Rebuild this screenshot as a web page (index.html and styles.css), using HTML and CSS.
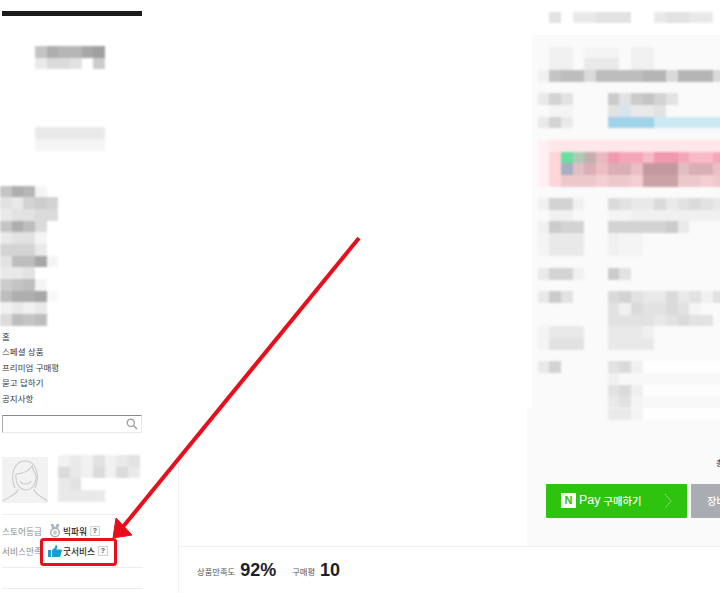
FILE: index.html
```html
<!DOCTYPE html>
<html lang="ko">
<head>
<meta charset="utf-8">
<title>스토어 상품</title>
<link rel="stylesheet" href="styles.css">
</head>
<body>
<div class="page">
  <aside class="sidebar">
    <div class="top-bar"></div>
    <div class="mosaic logo" data-rows="41220e|9778d5"></div>
    <div class="mosaic tagline" data-rows="999999|bbbbbb"></div>
    <div class="mosaic categories" data-rows="412b.|89656|98877|4137.|988b.|6669.|8330b|998..|543b.|3110c|a9a9.|7343."></div>
    <ul class="nav">
      <li>홈</li>
      <li>스페셜 상품</li>
      <li>프리미엄 구매평</li>
      <li>묻고 답하기</li>
      <li>공지사항</li>
    </ul>
    <div class="search">
      <svg class="search-icon" viewBox="0 0 12 12" width="12" height="12"><circle cx="4.8" cy="4.8" r="3.6"/><path d="M7.5 7.5 11 11"/></svg>
    </div>
    <div class="profile">
      <svg class="avatar" viewBox="0 0 46 46" width="46" height="46">
        <path d="M13 31C8 20 11 4 23 4s15 16 10 27"/>
        <path d="M14 17c6 0 13-3 16-8 1 4 2 6 4 9"/>
        <path d="M14 17c-1 9 4 16 10 16s11-7 10-15"/>
        <path d="M18 24c2 4 9 4 11 0"/>
        <path d="M16 32c0 5-8 7-15 12M32 32c0 5 7 7 13 12"/>
      </svg>
      <div class="mosaic seller" data-rows="a9a8a98|79a7a79|98.....|9999..."></div>
    </div>
    <div class="grade-list">
      <div class="grade-row">
        <span class="grade-label">스토어등급</span>
        <svg class="grade-icon" viewBox="0 0 13 14" width="13" height="14"><path class="medal-ribbon" d="M2 0h3l1.500 4L8 0h3L9 6H4z"/><circle class="medal-ring" cx="6.500" cy="8.500" r="4.300"/><circle class="medal-core" cx="6.500" cy="8.500" r="2.200"/></svg>
        <span class="grade-value">빅파워</span>
        <span class="help">?</span>
      </div>
      <div class="grade-row">
        <span class="grade-label">서비스만족</span>
        <svg class="grade-icon" viewBox="0 0 14 12" width="14" height="12"><path class="thumb" d="M0 5h3v7H0zM4 5l3-2.500L7.500 0c1.500 0 2 1.200 1.500 2.500L8.500 4.500H13c1 0 1 1 .8 1.500L12.500 11c-.2.700-.6 1-1.300 1H4z"/></svg>
        <span class="grade-value">굿서비스</span>
        <span class="help">?</span>
      </div>
    </div>
    <div class="side-rule"></div>
  </aside>

  <main class="main">
    <section class="content">
      <div class="detail">
        <div class="mosaic detail-head" data-rows=".8.99888..98899."></div>
        <div class="panel-top">
          <div class="mosaic" data-rows=".aa.bbb.aa......|.aa.999.aa......|a433733332272227|................|968...585468....|.bb...8y998.....|969...wwwwxxxxxx|................|fnnnnnnnnnnnnnnn|foghijkllmkklmml|fopqrzrrzsssqrrz|fotttuttuvvvttut|................|a66a..7899798789|.aac..bbaaaaaaaa|a566..6666659...|b999..abb.......|b999..abb.......|................|966a..58........|................|958...76899798a8|......8a78878b..|......888898788.|b999..999a......|b888..9999......|................|96....87addddddd|......accccccccc|......87addddddd|......98bccccccc"></div>
        </div>
        <div class="panel-bottom">
          <div class="mosaic last-row" data-rows="......99bddddddd"></div>
          <p class="total">총 상품 금액</p>
          <div class="actions">
            <button class="btn-pay" type="button">
              <span class="n-logo">N</span>
              <span class="pay-word">Pay</span>
              <span class="pay-label">구매하기</span>
              <svg class="pay-arrow" viewBox="0 0 8 16" width="8" height="16"><path d="M1 1l6 7-6 7"/></svg>
            </button>
            <button class="btn-cart" type="button">장바구니</button>
          </div>
        </div>
      </div>
    </section>
    <section class="stats">
      <span class="stat-label">상품만족도</span>
      <strong class="stat-value">92%</strong>
      <span class="stat-label stat-second">구매평</span>
      <strong class="stat-value">10</strong>
    </section>
  </main>

  <svg class="annotation" viewBox="0 0 720 593" width="720" height="593">
    <rect class="mark-box" x="41.500" y="539.500" width="74" height="25" rx="2"/>
    <path class="mark-line" d="M359 238 122 528"/>
    <path class="mark-head" d="M113 538 132 535 116 518z"/>
  </svg>
</div>
<script src="mosaic.js"></script>
</body>
</html>
```

FILE: styles.css
```css
* { box-sizing: border-box; }
html, body { margin: 0; padding: 0; background: #fff; }
body { font-family: "Noto Sans CJK KR", "Noto Sans", sans-serif; }

.page {
  position: relative;
  display: flex;
  width: 720px;
  height: 593px;
  overflow: hidden;
}

/* Pixelated regions */
.mosaic { display: grid; grid-auto-rows: 11.667px; filter: blur(0.9px); opacity: 0.92; }
.mosaic i { display: block; }

/* Sidebar */
.sidebar { flex: none; width: 178px; padding-left: 2px; display: flex; flex-direction: column; align-items: flex-start; }
.top-bar { width: 140px; height: 5px; margin-top: 11px; background: #1c1c1c; }
.logo { margin: 30px 0 0 33px; }
.tagline { margin: 58px 0 0 33px; }
.categories { margin: 35px 0 0 -2px; }

.nav { list-style: none; margin: 3px 0 0; padding: 0; font-size: 8.500px; line-height: 15.500px; color: #3a3a3a; white-space: nowrap; }

.search { position: relative; width: 140px; height: 18px; margin-top: 9px; border: 1px solid #e8e8e8; border-top-color: #8a8a8a; border-left-color: #adadad; display: flex; align-items: center; justify-content: flex-end; padding-right: 3px; }
.search-icon { fill: none; stroke: #9a9a9a; stroke-width: 1.200; }

.profile { display: flex; gap: 10px; margin-top: 22px; width: 140px; padding-bottom: 11px; border-bottom: 1px solid #f0f0f0; align-items: flex-start; }
.avatar { flex: none; margin-top: 2px; background: #f2f2f2; fill: none; stroke: #cbcbcb; stroke-width: 1.100; }

.grade-list { display: flex; flex-direction: column; gap: 6px; margin-top: 9px; width: 141px; padding-bottom: 9px; border-bottom: 1px solid #ececec; }
.grade-row { display: flex; align-items: center; height: 14px; font-size: 8.700px; }
.grade-label { width: 46px; flex: none; color: #8a8a8a; white-space: nowrap; }
.grade-icon { flex: none; width: 14px; margin-right: 1px; }
.grade-value { color: #2a2a2a; font-weight: 500; white-space: nowrap; }
.help { flex: none; width: 10px; height: 10px; margin-left: 3px; border: 1px solid #d2d2d2; background: #fafafa; color: #555; font: 700 7px/8px "Liberation Sans", sans-serif; text-align: center; }
.medal-ribbon { fill: #a9b8c2; }
.medal-ring { fill: #fff; stroke: #a8b0b4; stroke-width: 1.400; }
.medal-core { fill: #c6ccd0; }
.thumb { fill: #1b9fd2; }
.side-rule { width: 141px; height: 0; margin-top: 20px; border-top: 1px solid #ececec; }

/* Main column */
.main { flex: 1; min-width: 0; display: flex; flex-direction: column; border-left: 1px solid #f2f2f2; border-image: linear-gradient(transparent 75%, #f2f2f2 75%) 1; }
.content { flex: none; height: 547px; display: flex; justify-content: flex-end; border-bottom: 1px solid #f0f0f0; }
.detail { flex: none; width: 193px; overflow: hidden; display: flex; flex-direction: column; }
.detail-head { margin: 11.667px 0 0 10.667px; }
.panel-top { margin: 11.667px 0 0 5px; padding: 11.667px 0 0 5.667px; background: #fafafa; }
.panel-bottom { flex: 1; background: #fafafa; overflow: hidden; }
.last-row { margin-left: 10.667px; }
.total { margin: 38px 0 0 189px; width: 60px; font-size: 8px; line-height: 10px; color: #333; white-space: nowrap; }
.actions { display: flex; gap: 4px; margin: 16px 0 0 19px; width: 220px; }

.btn-pay { flex: none; width: 141px; height: 34px; border: 0; border-radius: 1px; padding: 0 15px; background: #2dc30f; color: #fff; display: flex; align-items: center; font-family: inherit; }
.n-logo { flex: none; width: 15px; height: 15px; background: #fff; color: #2dc30f; font: 700 11px/15px "Liberation Sans", sans-serif; text-align: center; }
.pay-word { margin-left: 3px; font: 400 12.500px/1 "Liberation Sans", sans-serif; }
.pay-label { margin-left: 3px; font-size: 10.300px; font-weight: 500; white-space: nowrap; }
.pay-arrow { margin-left: auto; fill: none; stroke: #a9e79a; stroke-width: 1; stroke-dasharray: 2 1; }
.btn-cart { flex: none; width: 100px; height: 34px; border: 0; border-radius: 1px; padding: 0 0 0 16px; background: #a9acb3; color: #fff; font: 500 10.300px "Noto Sans CJK KR", sans-serif; text-align: left; white-space: nowrap; }

/* Bottom stats */
.stats { flex: 1; display: flex; align-items: center; padding: 0 0 0 18px; color: #1e1e28; }
.stat-label { font-size: 8.300px; color: #555; white-space: nowrap; margin-top: 1px; }
.stat-second { margin-left: 16px; }
.stat-value { margin-left: 5px; font: 700 18px/1 "Liberation Sans", sans-serif; }

/* Red annotation drawn over the page */
.annotation { position: absolute; left: 0; top: 0; pointer-events: none; }
.mark-box { fill: none; stroke: #e80f1c; stroke-width: 3; }
.mark-line { fill: none; stroke: #e80f1c; stroke-width: 4; }
.mark-head { fill: #e80f1c; stroke: #e80f1c; stroke-linejoin: round; }
```

FILE: mosaic.js
```js
var CELL = 11.667;
var PALETTE = {
  "0": "#a0a0a0", "1": "#a8a8a8", "2": "#b0b0b0", "3": "#b8b8b8", "4": "#c0c0c0",
  "5": "#c8c8c8", "6": "#d0d0d0", "7": "#d8d8d8", "8": "#e0e0e0", "9": "#e8e8e8",
  "a": "#f0f0f0", "b": "#f4f4f4", "c": "#f8f8f8", "d": "#ffffff", "e": "#989898",
  "f": "#fff0f2",
  "g": "#5ddc98", "h": "#a8c8b0", "i": "#c0a8a8", "j": "#e8b4bc", "k": "#f090a8",
  "l": "#f4a0b4", "m": "#f8b4c4", "n": "#ffe6e8", "o": "#ffd4d8", "p": "#a0a8c0",
  "q": "#e0b8c0", "r": "#d8a8b0", "s": "#c09098", "t": "#ecc4c8", "u": "#f4ccd0",
  "v": "#c89ca0", "w": "#98d0e8", "x": "#c8e8f2", "y": "#d4e4ec", "z": "#ecb8c0"
};
document.querySelectorAll(".mosaic").forEach(function (box) {
  var rows = box.getAttribute("data-rows").split("|");
  box.style.gridTemplateColumns = "repeat(" + rows[0].length + ", " + CELL + "px)";
  rows.forEach(function (row) {
    row.split("").forEach(function (ch) {
      var cell = document.createElement("i");
      if (PALETTE[ch]) cell.style.background = PALETTE[ch];
      box.appendChild(cell);
    });
  });
});
```
